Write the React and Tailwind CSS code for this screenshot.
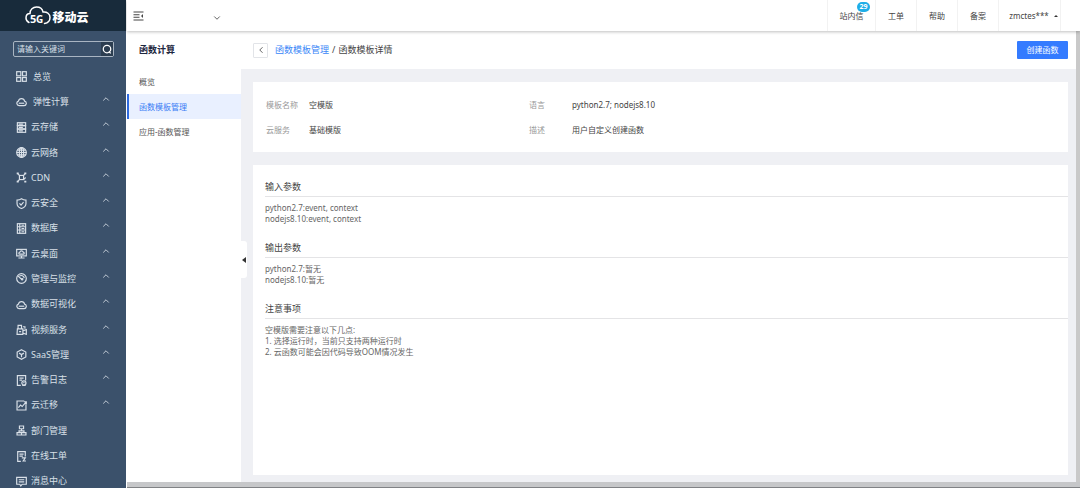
import { ChevronDown, ChevronLeft, ChevronUp } from "lucide-react";

const ICONS = {
  overview: (
    <>
      <rect x="1" y="1" width="6" height="6" />
      <rect x="9.5" y="1" width="5.5" height="6" />
      <rect x="1" y="9.5" width="6" height="5.5" />
      <rect x="9.5" y="9.5" width="5.5" height="5.5" />
    </>
  ),
  cloud: (
    <>
      <path d="M4.5 14h7.2a3.3 3.3 0 0 0 .8-6.5 4.6 4.6 0 0 0-9-.1A3.4 3.4 0 0 0 4.5 14z" />
      <path d="M4 10.5h8" />
    </>
  ),
  storage: (
    <>
      <rect x="2" y="1" width="12" height="4" />
      <rect x="2" y="5.5" width="12" height="4.5" />
      <rect x="2" y="10.5" width="12" height="4.5" />
      <path d="M4 3h6M4 7.8h6M4 12.8h6" />
    </>
  ),
  globe: (
    <>
      <circle cx="8" cy="8" r="7" />
      <ellipse cx="8" cy="8" rx="3.2" ry="7" />
      <path d="M1 8h14M8 1v14M2 4.5h12M2 11.5h12" />
    </>
  ),
  cdn: (
    <>
      <rect x="5" y="5" width="6" height="6" />
      <path d="M5 5L2 2M11 5l3-3M5 11l-3 3M11 11l3-3" />
      <path d="M1 2h3M12 2h3M1 14h3M12 14h3" strokeWidth="2.5" />
    </>
  ),
  shield: (
    <>
      <path d="M8 1c2 1.4 4.2 2 6.5 2v5c0 3.5-2.5 6-6.5 7.3C4 14 1.5 11.5 1.5 8V3C3.8 3 6 2.4 8 1z" />
      <path d="M5 7.8l2.3 2.4L11 6" />
    </>
  ),
  database: (
    <>
      <rect x="2" y="1" width="12" height="14" />
      <path d="M5.5 1v14M2 5.5h12M2 10.2h12M8 3.3h4M8 8h4M8 12.7h4" />
    </>
  ),
  desktop: (
    <>
      <rect x="1" y="2" width="14" height="9.5" />
      <path d="M3.5 14.5h9M5.5 9h5a1.5 1.5 0 0 0 0-3 2.6 2.6 0 0 0-5 .2A1.4 1.4 0 0 0 5.5 9zM8 11.5v3" />
    </>
  ),
  gauge: (
    <>
      <circle cx="8" cy="8" r="7" />
      <path d="M5 4.5A4.5 4.5 0 0 1 12 7.5M3 4.5l5.5 5" />
      <circle cx="9" cy="9" r="1" />
    </>
  ),
  video: (
    <>
      <path d="M2 7h8v8H1.5zM10 10l5-2v7l-5-2M3 7V2h5v5" />
      <path d="M4.5 11h3M10 4h3v3" />
    </>
  ),
  cube: (
    <>
      <path d="M8 1l6.3 3.5v7L8 15l-6.3-3.5v-7z" />
      <path d="M4.5 6L8 8l3.5-2M8 8v4" />
    </>
  ),
  log: (
    <>
      <path d="M7 15H2V1h12v7M5 4.5h6M5 7.5h4" />
      <circle cx="11.5" cy="11.5" r="3" />
      <path d="M11.5 10v2M9 15.3h5" />
    </>
  ),
  migrate: (
    <>
      <path d="M12 1.5H1.5v13h13V6" />
      <path d="M3.5 11l3-3.5 2.5 2L14.5 3M11.5 2.5h3.5V6" />
    </>
  ),
  department: (
    <path d="M5 1.5h6v4H5zM8 5.5v3M3.5 8.5h9M1.5 11h13v3.5h-13zM4.5 8.5V11M11.5 8.5V11M8 11v3.5" />
  ),
  order: (
    <>
      <path d="M7 15H2.5V1h11v7M5 4.5h6M5 7.5h5" />
      <path d="M8.5 10h5l-3 4.5h4" />
    </>
  ),
  message: (
    <>
      <path d="M1 2h14v10H9l-2 2.5L5.5 12H1z" />
      <path d="M4 5.5h8M4 8.5h8" />
    </>
  ),
};

const mainMenu = [
  { label: "总览", icon: "overview", wide: true },
  { label: "弹性计算", icon: "cloud", wide: true, open: true },
  { label: "云存储", icon: "storage", open: true },
  { label: "云网络", icon: "globe", open: true },
  { label: "CDN", icon: "cdn", open: true },
  { label: "云安全", icon: "shield", open: true },
  { label: "数据库", icon: "database", open: true },
  { label: "云桌面", icon: "desktop", open: true },
  { label: "管理与监控", icon: "gauge", open: true },
  { label: "数据可视化", icon: "cloud", open: true },
  { label: "视频服务", icon: "video", open: true },
  { label: "SaaS管理", icon: "cube", open: true },
  { label: "告警日志", icon: "log", open: true },
  { label: "云迁移", icon: "migrate", open: true },
  { label: "部门管理", icon: "department" },
  { label: "在线工单", icon: "order" },
  { label: "消息中心", icon: "message" },
];

const subMenu = [
  { label: "概览" },
  { label: "函数模板管理", active: true },
  { label: "应用-函数管理" },
];

const details = [
  { label: "模板名称", value: "空模版" },
  { label: "语言", value: "python2.7; nodejs8.10" },
  { label: "云服务", value: "基础模版" },
  { label: "描述", value: "用户自定义创建函数" },
];

const sections = [
  {
    title: "输入参数",
    lines: ["python2.7:event, context", "nodejs8.10:event, context"],
  },
  { title: "输出参数", lines: ["python2.7:暂无", "nodejs8.10:暂无"] },
  {
    title: "注意事项",
    lines: [
      "空模版需要注意以下几点:",
      "1. 选择运行时，当前只支持两种运行时",
      "2. 云函数可能会因代码导致OOM情况发生",
    ],
  },
];

const MenuIcon = ({ name }) => (
  <svg
    viewBox="0 0 16 16"
    className="w-[11px] h-[11px] shrink-0"
    fill="none"
    stroke="currentColor"
    strokeWidth="1.7"
    aria-hidden="true"
  >
    {ICONS[name]}
  </svg>
);

const Logo = () => (
  <a
    href="#"
    className="h-[31px] shrink-0 bg-[#182b3b] text-white flex items-center justify-center gap-px pr-3"
  >
    <svg
      viewBox="0 0 52 38"
      className="w-[26px] h-[19px] overflow-visible"
      aria-hidden="true"
    >
      <path
        d="M8 33C4 31 2 28 2 24c0-5 3-9 8-9C10 7 16 2 23 2c7 0 12 4 13 10 8-1 14 4 14 11 0 6-4 11-11 12"
        fill="none"
        stroke="white"
        strokeWidth="3"
        strokeLinecap="round"
      />
      <text x="10" y="34" fill="white" fontSize="22" fontWeight="bold">
        5
      </text>
      <text x="22" y="34" fill="white" fontSize="20" fontWeight="bold">
        G
      </text>
    </svg>
    <span className="text-[12px] leading-4 font-black pt-[5px]">移动云</span>
  </a>
);

const Sidebar = () => (
  <aside className="w-[126px] shrink-0 flex flex-col bg-[#3b516b] text-[#d9e0e8] overflow-hidden">
    <Logo />

    <form className="mr-3 mt-[10px] ml-[13px] h-4 shrink-0 flex border border-[#a9b5c2] rounded-[2px]">
      <input
        type="text"
        aria-label="请输入关键词"
        placeholder="请输入关键词"
        className="flex-1 min-w-0 px-[3px] text-[8px] leading-3 placeholder:text-[#d9e0e8] outline-none"
      />
      <button
        type="button"
        aria-label="搜索"
        className="w-3 bg-[#2b3d50] text-white flex items-center justify-center"
      >
        <svg
          viewBox="0 0 16 16"
          className="w-[10px] h-[10px]"
          fill="none"
          stroke="currentColor"
          strokeWidth="2"
          aria-hidden="true"
        >
          <circle cx="8" cy="8" r="6" />
          <path d="M11 12l3 3" />
        </svg>
      </button>
    </form>

    <ul className="mt-[7px] h-[430px] shrink-0 grid auto-rows-fr">
      {mainMenu.map((item) => (
        <li key={item.label}>
          <a
            href="#"
            className={`h-full pl-4 pr-[15px] flex items-center text-[9px] leading-3 ${
              item.wide ? "gap-[6px]" : "gap-1"
            }`}
          >
            <MenuIcon name={item.icon} />
            <span className="flex-1">{item.label}</span>
            {item.open && <ChevronUp size={10} className="mb-[6px]" />}
          </a>
        </li>
      ))}
    </ul>
  </aside>
);

const TopBar = () => (
  <header className="h-[31px] shrink-0 bg-white flex items-stretch text-[8px] text-[#444] shadow-[0_1px_3px_rgba(0,0,0,0.25)] relative z-10">
    <button type="button" aria-label="收起菜单" className="pl-[6px]">
      <svg
        viewBox="0 0 22 20"
        className="w-[11px] h-[10px]"
        stroke="#444"
        strokeWidth="2"
        aria-hidden="true"
      >
        <path d="M1 2h20M1 7.5h12M1 12.5h12M1 18h20" />
        <path d="M20 6v8l-4-4z" fill="#444" stroke="none" />
      </svg>
    </button>
    <label className="ml-[10px] w-[68px] flex items-center pt-1">
      <select
        aria-label="区域"
        className="flex-1 min-w-0 appearance-none outline-none"
      >
        <option value=""></option>
      </select>
      <ChevronDown size={10} className="shrink-0" />
    </label>

    <nav className="ml-auto mr-[19px] flex border-r border-[#f2f2f2]">
      <a
        href="#"
        className="relative w-12 flex items-center justify-center border-l border-[#f2f2f2]"
      >
        站内信
        <span className="absolute top-[2px] left-[29px] w-[13px] h-[10px] rounded-full bg-[#1eaee8] text-white text-[7px] leading-[10px] font-bold text-center">
          29
        </span>
      </a>
      {["工单", "帮助", "备案"].map((label) => (
        <a
          key={label}
          href="#"
          className="w-[41px] flex items-center justify-center border-l border-[#f2f2f2]"
        >
          {label}
        </a>
      ))}
      <button
        type="button"
        className="w-[62px] pl-2 flex items-center justify-center gap-[5px] border-l border-[#f2f2f2]"
      >
        zmctes***
        <svg viewBox="0 0 8 4" className="w-1 h-[2px]" aria-hidden="true">
          <path d="M0 4l4-4 4 4z" fill="#333" />
        </svg>
      </button>
    </nav>
  </header>
);

const SubNav = () => (
  <nav className="w-[114px] shrink-0 bg-white text-[8px] text-[#555]">
    <h2 className="h-[38px] pl-3 flex items-center text-[9px] font-bold text-[#1d2740]">
      函数计算
    </h2>
    <ul>
      {subMenu.map((item) => (
        <li key={item.label}>
          <a
            href="#"
            className={`h-[25px] pl-[10px] flex items-center border-l-2 ${
              item.active
                ? "border-[#2f6be0] bg-[#e9f0ff] text-[#3a7cf5]"
                : "border-transparent"
            }`}
          >
            {item.label}
          </a>
        </li>
      ))}
    </ul>
  </nav>
);

const PageHeader = () => (
  <div className="h-[38px] shrink-0 pl-3 pr-2 bg-white flex items-center text-[9px] text-[#444]">
    <button
      type="button"
      aria-label="返回"
      className="w-[15px] h-[15px] mr-[7px] flex items-center justify-center border border-[#e2e4e8] rounded-[1px]"
    >
      <ChevronLeft size={10} />
    </button>
    <a href="#" className="text-[#3a86f7]">
      函数模板管理
    </a>
    <span className="mx-[3px]">/</span>
    <span>函数模板详情</span>
    <button
      type="button"
      className="ml-auto w-[51px] h-[18px] bg-[#347bff] text-white text-[8px] rounded-[1px]"
    >
      创建函数
    </button>
  </div>
);

export default function App() {
  return (
    <div
      lang="zh-CN"
      className="h-screen flex overflow-hidden bg-white font-['Noto_Sans','Noto_Sans_CJK_SC',sans-serif]"
    >
      <Sidebar />

      <div className="flex-1 min-w-0 flex flex-col pl-px">
        <TopBar />

        <div className="flex-1 min-h-0 flex">
          <SubNav />

          <main className="relative flex-1 min-w-0 flex flex-col bg-[#eff0f4]">
            <PageHeader />

            <div className="flex-1 min-h-0 pt-[13px] pb-[7px] pl-3 pr-2 flex flex-col gap-[13px]">
              <dl className="bg-white h-[70px] shrink-0 px-[13px] grid grid-cols-[263px_1fr] content-center gap-y-[13px] text-[8px] leading-3">
                {details.map((item) => (
                  <div key={item.label} className="flex">
                    <dt className="w-[43px] text-[#999]">{item.label}</dt>
                    <dd className="text-[#444]">{item.value}</dd>
                  </div>
                ))}
              </dl>

              <div className="flex-1 bg-white pl-3 pt-4">
                {sections.map((section) => (
                  <section key={section.title} className="mb-[18px]">
                    <h3 className="pb-[3px] border-b border-[#e4e4e6] text-[9px] leading-3 text-[#444]">
                      {section.title}
                    </h3>
                    <div className="pt-[5px] text-[8px] leading-[11px] text-[#666]">
                      {section.lines.map((line) => (
                        <p key={line}>{line}</p>
                      ))}
                    </div>
                  </section>
                ))}
              </div>
            </div>

            <button
              type="button"
              aria-label="收起侧栏"
              className="absolute left-0 top-[210px] w-[6px] h-[37px] bg-white rounded-r-[3px] flex items-center justify-center"
            >
              <svg viewBox="0 0 4 6" className="w-1 h-[6px]" aria-hidden="true">
                <path d="M4 0v6L0 3z" fill="#333" />
              </svg>
            </button>
          </main>

          <div className="w-1 bg-[#c9c9c9]" />
        </div>

        <div className="h-[6px] shrink-0 bg-[#c6c7c9] border-b border-[#808285]" />
      </div>
    </div>
  );
}
